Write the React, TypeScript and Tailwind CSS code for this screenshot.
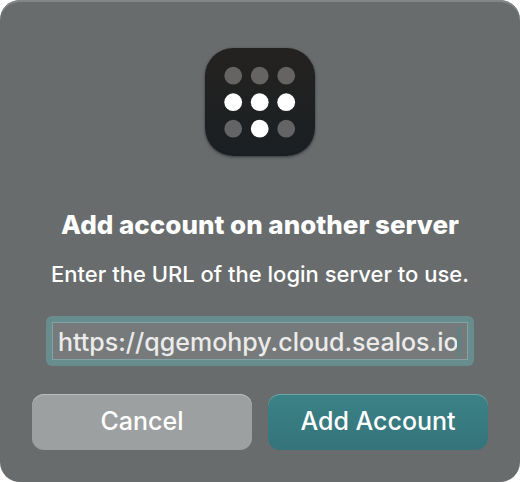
import React from "react";

const dots = [
  "#656462", "#656462", "#656462",
  "#ffffff", "#ffffff", "#ffffff",
  "#626466", "#ffffff", "#626466",
];

function AppIcon() {
  return (
    <div className="mt-12 flex h-27 w-[110px] items-center justify-center rounded-[28px] bg-linear-to-b from-[#242220] to-[#1a1f23] shadow-[0_1px_3px_rgba(0,0,0,0.5)]">
      <svg width="72" height="72" viewBox="0 0 72 72" aria-hidden="true">
        {dots.map((fill, i) => (
          <circle key={i} cx={9.2 + (i % 3) * 26.5} cy={9.7 + Math.floor(i / 3) * 26.5} r="8.9" fill={fill} />
        ))}
      </svg>
    </div>
  );
}

export default function App() {
  return (
    <main className="bg-white font-['Inter','Liberation_Sans',sans-serif] text-white">
      <form
        onSubmit={(e) => e.preventDefault()}
        className="flex w-full flex-col items-center rounded-[20px] bg-[#686c6d] px-8 pb-8 shadow-[inset_0_2px_0_#828687]"
      >
        <AppIcon />
        <h1 className="mt-[53px] text-[26px] leading-8 font-extrabold whitespace-nowrap">
          Add account on another server
        </h1>
        <label htmlFor="server" className="mt-[17px] text-[22px] leading-8 font-medium whitespace-nowrap">
          Enter the URL of the login server to use.
        </label>
        <div className="mt-[26px] w-full px-[14px]">
          <div className="relative rounded-md bg-[#688d8f] p-[6px]">
            <input
              id="server"
              type="text"
              defaultValue="https://qgemohpy.cloud.sealos.io"
              className="block h-[38px] w-full border border-[#85a3a4] bg-[#777a7a] px-[5px] pt-[2px] text-[25px] font-medium text-[#ebebeb] outline-none"
            />
            <span className="absolute top-[10px] right-[13px] h-8 w-1 rounded-sm bg-[#5f8284]" />
          </div>
        </div>
        <div className="mt-7 grid w-full grid-cols-2 gap-4 text-[25px] leading-8 font-medium">
          <button type="button" className="h-14 rounded-xl bg-[#9da0a1] pb-[2px] shadow-[inset_0_1px_0_#b9bbbc]">
            Cancel
          </button>
          <button
            type="submit"
            className="h-14 rounded-xl bg-linear-to-b from-[#3b8287] to-[#34747a] pb-[2px] shadow-[inset_0_1px_0_#70a3a7]"
          >
            Add Account
          </button>
        </div>
      </form>
    </main>
  );
}
